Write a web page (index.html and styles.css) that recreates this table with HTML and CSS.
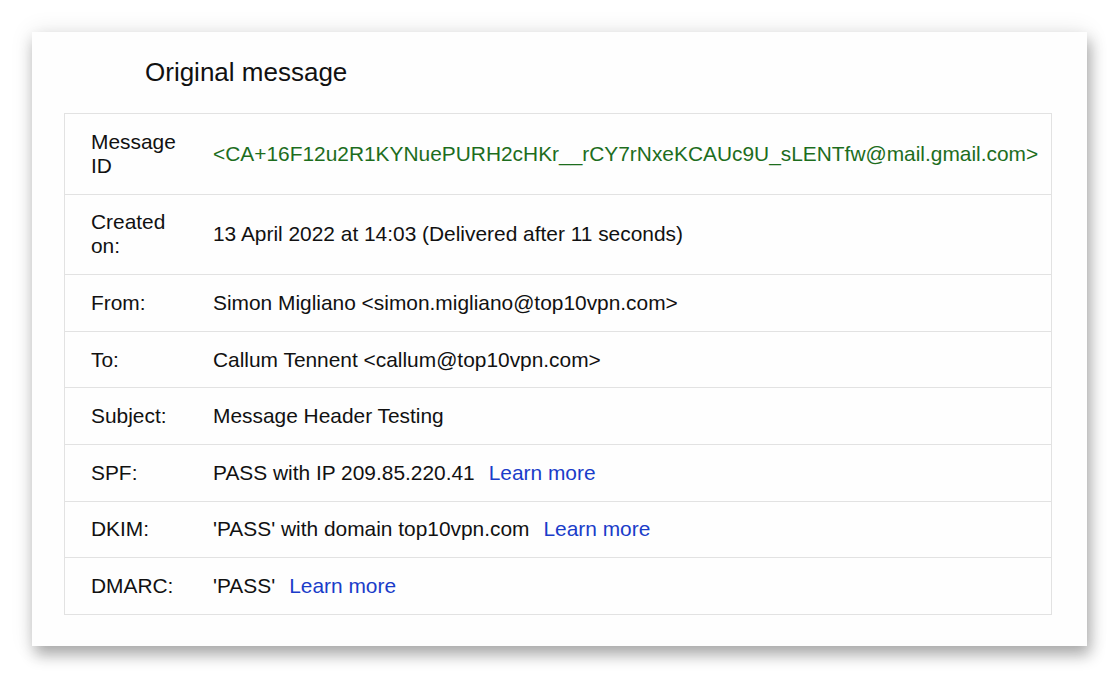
FILE: index.html
```html
<!DOCTYPE html>
<html lang="en">
<head>
<meta charset="utf-8">
<title>Original message</title>
<link rel="stylesheet" href="styles.css">
</head>
<body>
<div class="card">
  <h1 class="title">Original message</h1>
  <table class="headers">
    <tr class="tall">
      <th>Message ID</th>
      <td class="msgid">&lt;CA+16F12u2R1KYNuePURH2cHKr__rCY7rNxeKCAUc9U_sLENTfw@mail.gmail.com&gt;</td>
    </tr>
    <tr class="tall">
      <th>Created on:</th>
      <td>13 April 2022 at 14:03 (Delivered after 11 seconds)</td>
    </tr>
    <tr>
      <th>From:</th>
      <td>Simon Migliano &lt;simon.migliano@top10vpn.com&gt;</td>
    </tr>
    <tr>
      <th>To:</th>
      <td>Callum Tennent &lt;callum@top10vpn.com&gt;</td>
    </tr>
    <tr>
      <th>Subject:</th>
      <td>Message Header Testing</td>
    </tr>
    <tr>
      <th>SPF:</th>
      <td>PASS with IP 209.85.220.41<a class="learn" href="#">Learn more</a></td>
    </tr>
    <tr>
      <th>DKIM:</th>
      <td>'PASS' with domain top10vpn.com<a class="learn" href="#">Learn more</a></td>
    </tr>
    <tr>
      <th>DMARC:</th>
      <td>'PASS'<a class="learn" href="#">Learn more</a></td>
    </tr>
  </table>
</div>
</body>
</html>
```

FILE: styles.css
```css
html, body {
  margin: 0;
  padding: 0;
  background: #ffffff;
}

body {
  font-family: "Liberation Sans", Arial, sans-serif;
  color: #202124;
  box-sizing: border-box;
  min-height: 678px;
  padding: 32px 0 0 32px;
}

.card {
  width: 1055px;
  height: 614px;
  box-sizing: border-box;
  background: #fefefe;
  padding: 25px 35px 0 32px;
  box-shadow: 3px 9px 14px rgba(0, 0, 0, 0.30), 0 0 22px rgba(0, 0, 0, 0.10);
}

.title {
  margin: 0 0 26px 81px;
  font-size: 26px;
  line-height: 30px;
  font-weight: normal;
  color: #111;
}

.headers {
  width: 988px;
  border-collapse: collapse;
  border: 1px solid #e2e2e2;
  font-size: 20.9px;
  line-height: 24px;
}

.headers tr {
  border-top: 1px solid #e2e2e2;
}

.headers th {
  width: 100px;
  padding: 15.8px 22px 15.8px 26px;
  text-align: left;
  font-weight: normal;
  vertical-align: top;
  color: #111;
}

.headers td {
  padding: 15.8px 10px 15.8px 0;
  vertical-align: middle;
  color: #111;
}

.headers .msgid {
  color: #1d6d1d;
  white-space: nowrap;
}

.learn {
  margin-left: 14px;
  color: #1a3cc9;
  text-decoration: none;
}
```
